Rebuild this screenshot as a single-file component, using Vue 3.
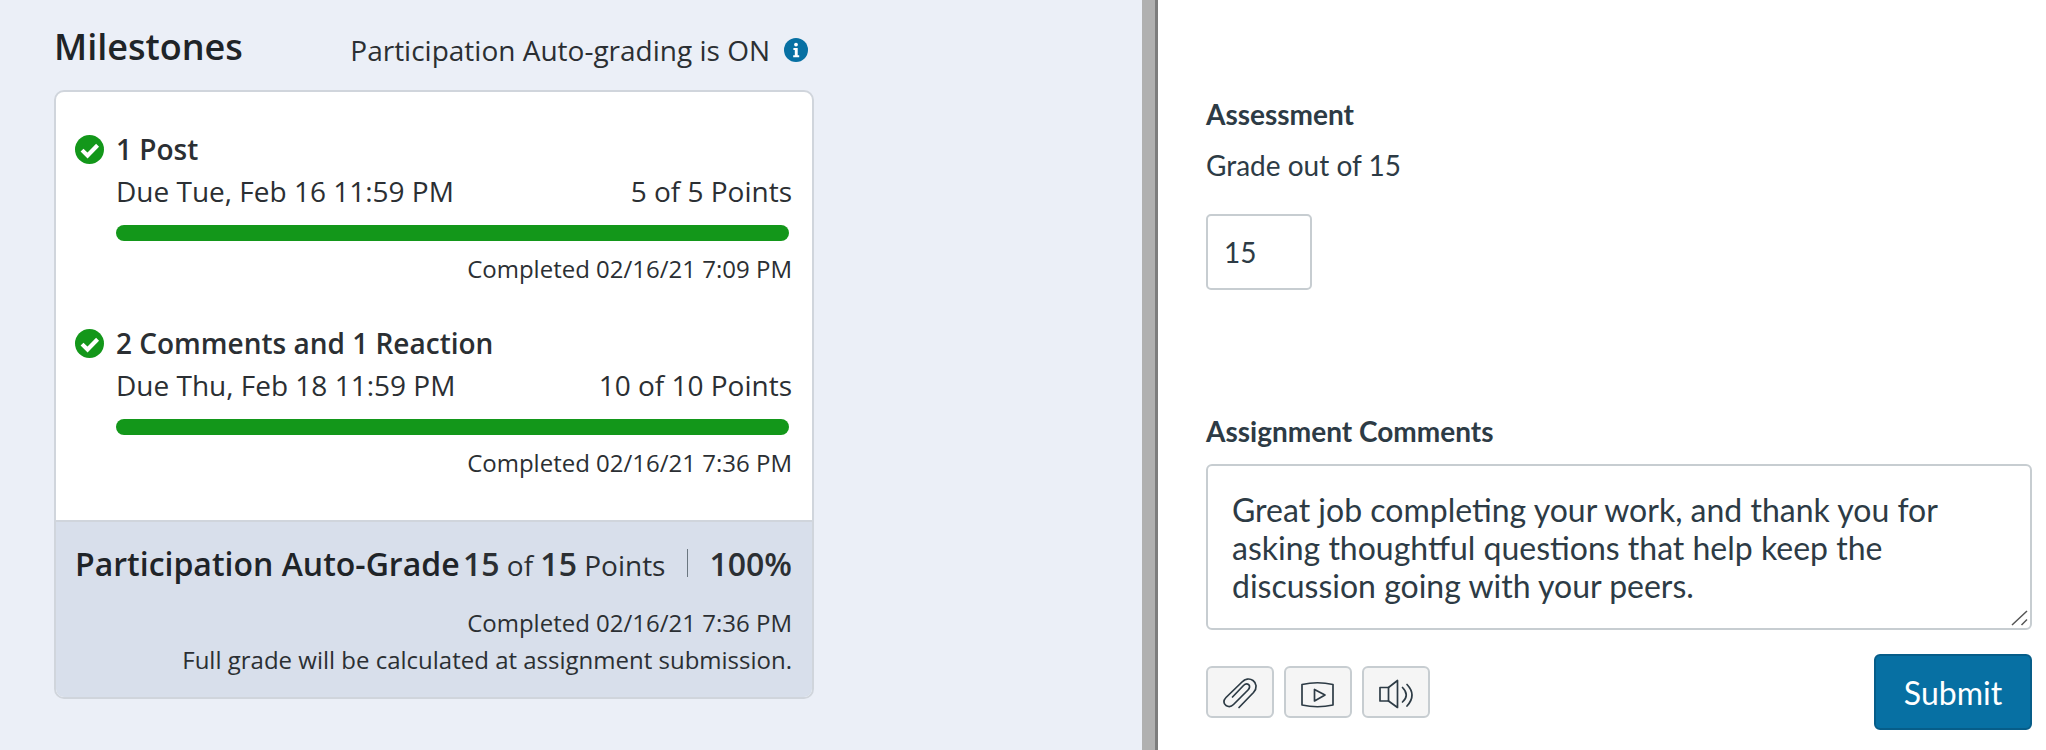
<template>
  <div class="page">
    <section class="milestones-pane">
      <header class="pane-head">
        <h2 class="pane-title">Milestones</h2>
        <div class="auto-status">
          <span>Participation Auto-grading is ON</span>
          <svg class="info-icon" viewBox="0 0 24 24" aria-hidden="true">
            <circle cx="12" cy="12" r="12" fill="#0770a3" />
            <circle cx="12" cy="6.6" r="1.9" fill="#fff" />
            <path d="M9.4 10h4.3v7.3h1.5v2H9.2v-2h1.6v-5.3H9.4z" fill="#fff" />
          </svg>
        </div>
      </header>

      <div class="card">
        <div class="card-body">
          <div v-for="item in milestones" :key="item.title" class="milestone">
            <div class="milestone-title">
              <svg class="check-icon" viewBox="0 0 28 28" aria-hidden="true">
                <circle cx="14" cy="14" r="14" fill="#13971a" />
                <path d="M6.800 14.600l5.300 5.200 9.700-9.900" fill="none" stroke="#fff" stroke-width="4" />
              </svg>
              <span>{{ item.title }}</span>
            </div>
            <div class="milestone-detail">
              <div class="due-row">
                <span>{{ item.due }}</span>
                <span>{{ item.points }}</span>
              </div>
              <div class="bar"></div>
              <div class="completed">{{ item.completed }}</div>
            </div>
          </div>
        </div>

        <div class="card-foot">
          <div class="foot-row">
            <span class="foot-title">Participation Auto-Grade</span>
            <span class="foot-score"><b>15</b> of <b>15</b> Points</span>
            <span class="foot-sep"></span>
            <b class="foot-percent">100%</b>
          </div>
          <div class="foot-note first">Completed 02/16/21 7:36 PM</div>
          <div class="foot-note">Full grade will be calculated at assignment submission.</div>
        </div>
      </div>
    </section>

    <div class="divider"></div>

    <section class="assess-pane">
      <h3 class="label">Assessment</h3>
      <p class="grade-text">Grade out of 15</p>
      <input class="grade-input" type="text" value="15" aria-label="Grade" />

      <h3 class="label comments-label">Assignment Comments</h3>
      <div class="comments-wrap">
        <textarea class="comments" aria-label="Assignment Comments">Great job completing your work, and thank you for asking thoughtful questions that help keep the discussion going with your peers.</textarea>
        <!-- resize grip -->
        <svg class="grip" viewBox="0 0 18 16" aria-hidden="true">
          <path d="M1 15L16 1M10.500 15L16 9.500" fill="none" stroke="#555" stroke-width="1.500" />
        </svg>
      </div>

      <div class="actions">
        <button class="tool-btn" type="button" aria-label="Attach file">
          <svg viewBox="0 0 68 52" aria-hidden="true">
            <path d="M33 41.500L47.500 26.500C51.500 22 50.500 17 47 14.500C43.500 12 39 13 36 16L20 31.500C17 34.500 17.500 38 20 39.500C22.500 41 25.500 40.500 27.500 38.500L42 24C44 22 44 19.500 42.500 18.500C41 17.500 39 18 37.500 19.500L26.500 31" />
          </svg>
        </button>
        <button class="tool-btn" type="button" aria-label="Record media">
          <svg viewBox="0 0 68 52" aria-hidden="true">
            <path d="M18 18.500Q33.500 15 49 18.500V39Q33.500 42.500 18 39Z" />
            <path d="M30.500 23.500V35L41 29Z" />
          </svg>
        </button>
        <button class="tool-btn" type="button" aria-label="Record audio">
          <svg viewBox="0 0 68 52" aria-hidden="true">
            <path d="M18 21.500H26.500V35H18Z" />
            <path d="M26.500 21.500L35.500 14.500V41.500L26.500 35" />
            <path d="M40.500 21.500Q48 29 40.500 36" />
            <path d="M45 18.500Q55 29 45 40" />
          </svg>
        </button>
        <button class="submit-btn" type="button">Submit</button>
      </div>
    </section>
  </div>
</template>

<script setup>
const milestones = [
  {
    title: '1 Post',
    due: 'Due Tue, Feb 16 11:59 PM',
    points: '5 of 5 Points',
    completed: 'Completed 02/16/21 7:09 PM'
  },
  {
    title: '2 Comments and 1 Reaction',
    due: 'Due Thu, Feb 18 11:59 PM',
    points: '10 of 10 Points',
    completed: 'Completed 02/16/21 7:36 PM'
  }
]
</script>

<style>
html,
body {
  margin: 0;
  background: #fff;
}
</style>

<style scoped>
.page {
  display: flex;
  width: 2046px;
  height: 750px;
  overflow: hidden;
  color: #2d3b45;
}

.milestones-pane {
  width: 1142px;
  box-sizing: border-box;
  padding: 24px 328px 0 54px;
  background: #ebeff7;
  font-family: "Open Sans", "Noto Sans", sans-serif;
  color: #2b2f33;
}

.pane-head {
  display: flex;
  justify-content: space-between;
  align-items: flex-start;
  height: 66px;
  padding-right: 5px;
}

.pane-title {
  margin: 0;
  font-size: 36px;
  line-height: 46px;
  font-weight: 600;
  color: #1f2428;
}

.auto-status {
  display: flex;
  align-items: center;
  gap: 14px;
  margin-top: 7px;
  padding-right: 1px;
  font-size: 28px;
  line-height: 38px;
}

.info-icon {
  width: 24px;
  height: 24px;
}

.card {
  height: 609px;
  box-sizing: border-box;
  display: flex;
  flex-direction: column;
  border: 2px solid #d0d5dc;
  border-radius: 10px;
  overflow: hidden;
  background: #fff;
}

.card-body {
  height: 428px;
  box-sizing: border-box;
  padding: 39px 20px 0 19px;
  display: flex;
  flex-direction: column;
  gap: 40px;
}

.milestone-title {
  display: flex;
  align-items: center;
  gap: 12px;
  font-size: 28px;
  line-height: 36px;
  font-weight: 600;
}

.check-icon {
  width: 29px;
  height: 29px;
}

.milestone-detail {
  padding-left: 41px;
}

.due-row {
  display: flex;
  justify-content: space-between;
  margin-top: 5px;
  font-size: 28px;
  line-height: 38px;
}

.bar {
  height: 16px;
  margin: 15px 3px 0 0;
  border-radius: 8px;
  background: #13971a;
}

.completed {
  margin-top: 12px;
  text-align: right;
  font-size: 24px;
  line-height: 32px;
}

.card-foot {
  flex: 1;
  padding: 19px 20px 0 19px;
  border-top: 2px solid #d0d5dc;
  background: #d8dfeb;
}

.foot-row {
  display: flex;
  align-items: center;
  height: 44px;
  white-space: nowrap;
}

.foot-title {
  flex: none;
  margin-right: auto;
  font-size: 32px;
  font-weight: 600;
  color: #1f2428;
}

.foot-score {
  flex: none;
  font-size: 28px;
}

.foot-score b,
.foot-percent {
  font-size: 32px;
  font-weight: 600;
}

.foot-sep {
  flex: none;
  width: 1px;
  height: 28px;
  margin: 0 21px 0 22px;
  background: #6b7780;
}

.foot-note {
  text-align: right;
  font-size: 24px;
  line-height: 37px;
}

.foot-note.first {
  margin-top: 19px;
}

.divider {
  width: 16px;
  box-sizing: border-box;
  background: #b0b0b0;
  border-right: 3px solid #7d7d7d;
}

.assess-pane {
  flex: 1;
  padding: 96px 14px 0 48px;
  font-family: Lato, "Open Sans", sans-serif;
}

.label {
  margin: 0;
  font-size: 28px;
  line-height: 36px;
  font-weight: 700;
}

.grade-text {
  margin: 15px 0 0;
  font-size: 28px;
  line-height: 36px;
}

.grade-input {
  display: block;
  width: 106px;
  height: 76px;
  margin-top: 31px;
  padding: 0 16px;
  box-sizing: border-box;
  border: 2px solid #c7cdd1;
  border-radius: 5px;
  outline: none;
  background: #fff;
  color: #2d3b45;
  font: 28px Lato, sans-serif;
}

.comments-label {
  margin-top: 123px;
}

.comments-wrap {
  position: relative;
  width: 826px;
  height: 166px;
  margin-top: 15px;
}

.comments {
  display: block;
  width: 100%;
  height: 100%;
  padding: 25px 24px 0;
  box-sizing: border-box;
  border: 2px solid #c7cdd1;
  border-radius: 6px;
  outline: none;
  resize: none;
  background: #fff;
  color: #2d3b45;
  font: 32px/38px Lato, sans-serif;
}

.grip {
  position: absolute;
  right: 3px;
  bottom: 4px;
  width: 18px;
  height: 16px;
}

.actions {
  display: flex;
  align-items: flex-start;
  margin-top: 24px;
}

.tool-btn {
  width: 68px;
  height: 52px;
  margin: 12px 10px 0 0;
  padding: 0;
  display: flex;
  align-items: center;
  justify-content: center;
  box-sizing: border-box;
  border: 2px solid #c7cdd1;
  border-radius: 6px;
  background: #f5f5f5;
}

.tool-btn svg {
  flex: none;
  width: 68px;
  height: 52px;
  fill: none;
  stroke: #2d3b45;
  stroke-width: 1.7;
  stroke-linejoin: round;
  stroke-linecap: round;
}

.submit-btn {
  width: 158px;
  height: 76px;
  margin-left: auto;
  box-sizing: border-box;
  border: 2px solid #065d89;
  border-radius: 6px;
  background: #0770a3;
  color: #fff;
  font: 32px Lato, sans-serif;
}
</style>
